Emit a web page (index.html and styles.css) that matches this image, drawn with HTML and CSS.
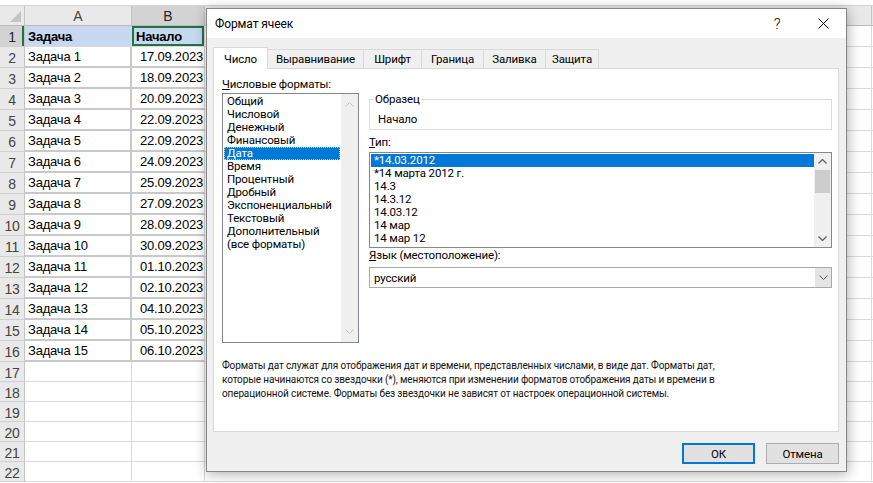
FILE: index.html
```html
<!DOCTYPE html>
<html lang="ru">
<head>
<meta charset="utf-8">
<title>Формат ячеек</title>
<link rel="stylesheet" href="styles.css">
</head>
<body>
<div class="sheet">
  <div class="sheet-top"></div>
  <div class="grid">
    <div class="c h corner"><span class="tri"></span></div><div class="c h">A</div><div class="c h sel">B</div><div class="c h"></div><div class="c h"></div>
    <div class="c rh sel rh1">1</div><div class="c fill b">Задача</div><div class="c fill b cur">Начало</div><div class="c"></div><div class="c"></div>
    <div class="c rh">2</div><div class="c da">Задача 1</div><div class="c db">17.09.2023</div><div class="c"></div><div class="c"></div>
    <div class="c rh">3</div><div class="c da">Задача 2</div><div class="c db">18.09.2023</div><div class="c"></div><div class="c"></div>
    <div class="c rh">4</div><div class="c da">Задача 3</div><div class="c db">20.09.2023</div><div class="c"></div><div class="c"></div>
    <div class="c rh">5</div><div class="c da">Задача 4</div><div class="c db">22.09.2023</div><div class="c"></div><div class="c"></div>
    <div class="c rh">6</div><div class="c da">Задача 5</div><div class="c db">22.09.2023</div><div class="c"></div><div class="c"></div>
    <div class="c rh">7</div><div class="c da">Задача 6</div><div class="c db">24.09.2023</div><div class="c"></div><div class="c"></div>
    <div class="c rh">8</div><div class="c da">Задача 7</div><div class="c db">25.09.2023</div><div class="c"></div><div class="c"></div>
    <div class="c rh">9</div><div class="c da">Задача 8</div><div class="c db">27.09.2023</div><div class="c"></div><div class="c"></div>
    <div class="c rh">10</div><div class="c da">Задача 9</div><div class="c db">28.09.2023</div><div class="c"></div><div class="c"></div>
    <div class="c rh">11</div><div class="c da">Задача 10</div><div class="c db">30.09.2023</div><div class="c"></div><div class="c"></div>
    <div class="c rh">12</div><div class="c da">Задача 11</div><div class="c db">01.10.2023</div><div class="c"></div><div class="c"></div>
    <div class="c rh">13</div><div class="c da">Задача 12</div><div class="c db">02.10.2023</div><div class="c"></div><div class="c"></div>
    <div class="c rh">14</div><div class="c da">Задача 13</div><div class="c db">04.10.2023</div><div class="c"></div><div class="c"></div>
    <div class="c rh">15</div><div class="c da">Задача 14</div><div class="c db">05.10.2023</div><div class="c"></div><div class="c"></div>
    <div class="c rh">16</div><div class="c da">Задача 15</div><div class="c db">06.10.2023</div><div class="c"></div><div class="c"></div>
    <div class="c rh">17</div><div class="c"></div><div class="c"></div><div class="c"></div><div class="c"></div>
    <div class="c rh">18</div><div class="c"></div><div class="c"></div><div class="c"></div><div class="c"></div>
    <div class="c rh">19</div><div class="c"></div><div class="c"></div><div class="c"></div><div class="c"></div>
    <div class="c rh">20</div><div class="c"></div><div class="c"></div><div class="c"></div><div class="c"></div>
    <div class="c rh">21</div><div class="c"></div><div class="c"></div><div class="c"></div><div class="c"></div>
    <div class="c rh">22</div><div class="c"></div><div class="c"></div><div class="c"></div><div class="c"></div>
  </div>
</div>

<div class="dialog">
  <div class="titlebar">
    <span class="title">Формат ячеек</span>
    <span class="tbtn help">?</span>
    <span class="tbtn close"><svg width="11" height="11" viewBox="0 0 11 11"><path d="M0.5 0.5 L10.5 10.5 M10.5 0.5 L0.5 10.5" stroke="#000" stroke-width="1" fill="none"/></svg></span>
  </div>
  <div class="body">
    <div class="tabs">
      <div class="tab active t1">Число</div>
      <div class="tab t2">Выравнивание</div>
      <div class="tab t3">Шрифт</div>
      <div class="tab t4">Граница</div>
      <div class="tab t5">Заливка</div>
      <div class="tab t6">Защита</div>
    </div>
    <div class="panel">
      <div class="panel-top">
        <div class="leftcol">
          <div class="lbl"><u>Ч</u>исловые форматы:</div>
          <div class="listbox cats">
            <div class="items">
              <div class="item">Общий</div>
              <div class="item">Числовой</div>
              <div class="item">Денежный</div>
              <div class="item">Финансовый</div>
              <div class="item selected focus">Дата</div>
              <div class="item">Время</div>
              <div class="item">Процентный</div>
              <div class="item">Дробный</div>
              <div class="item">Экспоненциальный</div>
              <div class="item">Текстовый</div>
              <div class="item">Дополнительный</div>
              <div class="item">(все форматы)</div>
            </div>
            <div class="vscroll disabled">
              <svg class="arr" width="9" height="5" viewBox="0 0 9 5"><path d="M0.5 4.5 L4.5 0.5 L8.5 4.5" stroke="#c2c2c2" fill="none"/></svg>
              <svg class="arr" width="9" height="5" viewBox="0 0 9 5"><path d="M0.5 0.5 L4.5 4.5 L8.5 0.5" stroke="#c2c2c2" fill="none"/></svg>
            </div>
          </div>
        </div>
        <div class="rightcol">
          <fieldset class="sample">
            <legend>Образец</legend>
            <div class="sample-val">Начало</div>
          </fieldset>
          <div class="lbl lbl-type"><u>Т</u>ип:</div>
          <div class="listbox types">
            <div class="items">
              <div class="item selected">*14.03.2012</div>
              <div class="item">*14 марта 2012 г.</div>
              <div class="item">14.3</div>
              <div class="item">14.3.12</div>
              <div class="item">14.03.12</div>
              <div class="item">14 мар</div>
              <div class="item">14 мар 12</div>
            </div>
            <div class="vscroll">
              <div class="sbtn"><svg width="9" height="5" viewBox="0 0 9 5"><path d="M0.5 4.5 L4.5 0.5 L8.5 4.5" stroke="#606060" stroke-width="1.3" fill="none"/></svg></div>
              <div class="thumb"></div>
              <div class="track"></div>
              <div class="sbtn"><svg width="9" height="5" viewBox="0 0 9 5"><path d="M0.5 0.5 L4.5 4.5 L8.5 0.5" stroke="#606060" stroke-width="1.3" fill="none"/></svg></div>
            </div>
          </div>
          <div class="lbl lbl-lang"><u>Я</u>зык (местоположение):</div>
          <div class="combo">
            <span class="combo-val">русский</span>
            <span class="combo-btn"><svg width="9" height="5" viewBox="0 0 9 5"><path d="M0.5 0.5 L4.5 4.5 L8.5 0.5" stroke="#555" fill="none"/></svg></span>
          </div>
        </div>
      </div>
      <p class="desc">Форматы дат служат для отображения дат и времени, представленных числами, в виде дат. Форматы дат, которые начинаются со звездочки (*), меняются при изменении форматов отображения даты и времени в операционной системе. Форматы без звездочки не зависят от настроек операционной системы.</p>
    </div>
    <div class="buttons">
      <div class="btn default">ОК</div>
      <div class="btn">Отмена</div>
    </div>
  </div>
</div>
</body>
</html>
```

FILE: styles.css
```css
* { box-sizing: border-box; }
html, body { margin: 0; padding: 0; }
body {
  width: 873px;
  height: 483px;
  overflow: hidden;
  background: #fff;
  font-family: "Liberation Sans", Arial, sans-serif;
  position: relative;
}

/* ---------- spreadsheet ---------- */
.sheet-top { height: 6px; background: #fff; border-bottom: 1px solid #d4d4d4; }
.grid {
  display: grid;
  grid-template-columns: 25px 107px 73px 667px 1fr;
  grid-template-rows: 20px repeat(16, 21px) repeat(6, 20px);
}
.c {
  border-right: 1px solid #dadada;
  border-bottom: 1px solid #dadada;
  font-size: 13px;
  letter-spacing: -0.2px;
  color: #000;
  display: flex;
  align-items: center;
  padding: 0 3px;
  white-space: nowrap;
  overflow: hidden;
}
.h {
  background: #e9e9e9;
  border-right-color: #c4c4c4;
  border-bottom-color: #bcbcbc;
  justify-content: center;
  color: #444;
  font-size: 14px;
  letter-spacing: 0;
}
.h.sel { background: #d3d3d3; color: #262626; }
.corner { position: relative; padding: 0; }
.tri {
  position: absolute;
  right: 3px;
  bottom: 3px;
  width: 0;
  height: 0;
  border-left: 11px solid transparent;
  border-bottom: 11px solid #c3c3c3;
}
.rh {
  background: #e9e9e9;
  border-right-color: #c4c4c4;
  border-bottom-color: #d0d0d0;
  justify-content: center;
  color: #444;
  padding: 2px 0 0 0;
  font-size: 14px;
  letter-spacing: -0.3px;
}
.rh.sel { background: #d3d3d3; color: #262626; }
.rh1 { box-shadow: inset -2px 0 0 #217346; }
.fill { background: #c6d9f1; }
.b { font-weight: bold; }
.cur { box-shadow: inset 0 0 0 2px #217346; padding-left: 4px; }
.da { border-right: 2px solid #c9c9c9; border-bottom: 2px solid #c9c9c9; }
.db { border-bottom: 2px solid #c9c9c9; justify-content: flex-end; padding-right: 1px; }

/* ---------- dialog ---------- */
.dialog {
  position: absolute;
  left: 206px;
  top: 8px;
  width: 641px;
  height: 464px;
  border: 1px solid #868686;
  background: #f0f0f0;
  box-shadow: 1px 2px 12px rgba(0, 0, 0, 0.32);
  font-family: Roboto, "Noto Sans", sans-serif;
  font-size: 11.5px;
  letter-spacing: -0.15px;
  color: #000;
  display: flex;
  flex-direction: column;
}
.titlebar {
  height: 29px;
  background: #fff;
  display: flex;
  align-items: center;
  padding-left: 8px;
}
.title { flex: 1; font-size: 12px; letter-spacing: -0.1px; }
.tbtn {
  width: 46px;
  height: 29px;
  display: flex;
  align-items: center;
  justify-content: center;
}
.help { font-size: 15px; font-weight: 300; }

.body { flex: 1; padding: 9px 7px 0 6px; }
.tabs { display: flex; height: 21px; }
.tab {
  height: 19px;
  margin-top: 2px;
  border: 1px solid #d9d9d9;
  border-right: none;
  border-bottom: none;
  background: #f0f0f0;
  display: flex;
  align-items: center;
  justify-content: center;
}
.tab.active {
  height: 22px;
  margin-top: 0;
  margin-bottom: -1px;
  background: #fff;
  border-right: 1px solid #d9d9d9;
  position: relative;
  z-index: 1;
}
.t1 { width: 55px; }
.t2 { width: 95px; border-left: none; }
.t3 { width: 58px; }
.t4 { width: 62px; }
.t5 { width: 62px; }
.t6 { width: 54px; border-right: 1px solid #d9d9d9; }

.panel {
  height: 364px;
  background: #fff;
  border: 1px solid #d9d9d9;
}
.panel-top { display: flex; padding: 9px 0 0 8px; gap: 10px; }
.lbl { line-height: 13px; height: 13px; white-space: nowrap; }
.leftcol { width: 137px; }

.listbox {
  border: 1px solid #828790;
  background: #fff;
  display: flex;
}
.listbox .items { flex: 1; padding: 1px 1px 0 1px; }
.item { line-height: 13px; height: 13px; padding-left: 3px; white-space: nowrap; }
.item.selected { background: #0078d7; color: #fff; }
.item.focus { outline: 1px dotted #e9c98a; outline-offset: -1px; }
.cats { margin-top: 2px; height: 250px; }
.vscroll {
  width: 17px;
  background: #f0f0f0;
  display: flex;
  flex-direction: column;
}
.vscroll.disabled { justify-content: space-between; align-items: center; padding: 8px 0 8px; }
.rightcol { width: 463px; margin-top: 15px; display: flex; flex-direction: column; }

.sample {
  margin: 0;
  padding: 7px 0 3px 8px;
  border: 1px solid #dcdcdc;
  min-inline-size: 0;
}
.sample legend {
  padding: 0 2px;
  margin-left: -5px;
  line-height: 13px;
}
.sample-val { line-height: 13px; height: 13px; }
.lbl-type { margin-top: 6px; }
.types { margin-top: 3px; height: 96px; }
.types .items { padding: 1px 0 0 1px; }
.types .item { padding-left: 3px; }
.sbtn { height: 17px; display: flex; align-items: center; justify-content: center; }
.thumb { height: 23px; background: #cdcdcd; margin: 0 1px; }
.track { flex: 1; }
.lbl-lang { margin-top: 1px; }
.combo {
  margin-top: 5px;
  height: 21px;
  border: 1px solid #a9a9a9;
  background: #fff;
  display: flex;
  align-items: stretch;
}
.combo-val { flex: 1; padding-left: 4px; display: flex; align-items: center; }
.combo-btn {
  width: 16px;
  background: #e5e5e5;
  display: flex;
  align-items: center;
  justify-content: center;
}

.desc {
  margin: 16px 0 0 0;
  padding: 0 92px 0 8px;
  font-size: 10px;
  letter-spacing: -0.13px;
  line-height: 14px;
  color: #111;
}

.buttons { display: flex; justify-content: flex-end; gap: 11px; margin-top: 11px; }
.btn {
  width: 73px;
  height: 21px;
  background: #e1e1e1;
  border: 1px solid #adadad;
  display: flex;
  align-items: center;
  justify-content: center;
}
.btn.default { border: 2px solid #0078d7; }
```
